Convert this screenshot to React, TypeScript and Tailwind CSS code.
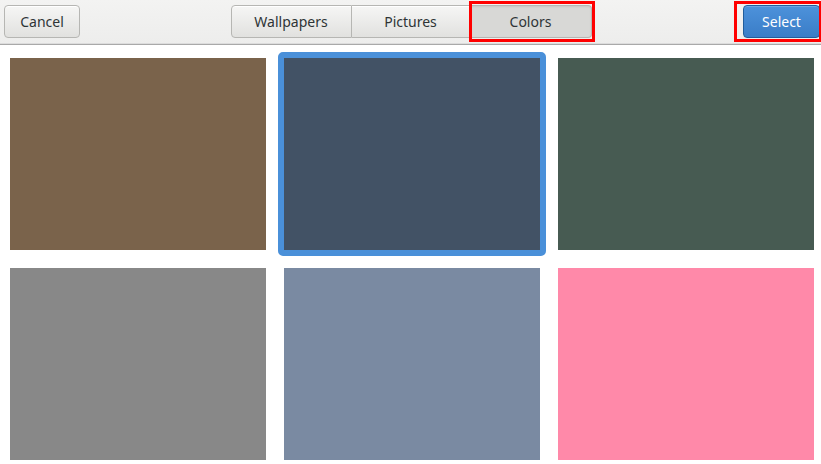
import React from "react";

const colors = ["#7a634b", "#425265", "#475b52", "#888888", "#7a8aa2", "#ff89a9"];

function RedBox({ className }: { className: string }) {
  return <span className={"pointer-events-none absolute border-[3px] border-[#ff0000] " + className} />;
}

export default function App() {
  return (
    <div
      className="w-[821px] h-[464px] overflow-hidden bg-white text-[#2e3436]"
      style={{ fontFamily: '"Noto Sans", "DejaVu Sans", sans-serif' }}
    >
      <div className="relative h-[45px] border-b border-[#a9a9a9] bg-gradient-to-b from-[#f3f3f2] to-[#ededec] shadow-[inset_0_-1px_0_#dcdcdc] grid grid-cols-[1fr_auto_1fr] items-start pt-[5px]">
        <div className="pl-[4px]">
          <button className="h-[33px] w-[76px] rounded-[4px] border border-[#b6b6b3] bg-gradient-to-b from-[#f6f6f5] to-[#e1e1df] text-[14px] shadow-[inset_0_1px_0_#ffffff]">
            Cancel
          </button>
        </div>
        <div className="flex ml-[1px]">
          <button className="h-[33px] w-[121px] rounded-l-[4px] border border-[#b6b6b3] bg-gradient-to-b from-[#f6f6f5] to-[#e1e1df] text-[14px] shadow-[inset_0_1px_0_#ffffff]">
            Wallpapers
          </button>
          <button className="h-[33px] w-[119px] border-y border-r border-[#b6b6b3] bg-gradient-to-b from-[#f6f6f5] to-[#e1e1df] text-[14px] shadow-[inset_0_1px_0_#ffffff]">
            Pictures
          </button>
          <div className="relative">
            <button className="h-[33px] w-[121px] rounded-r-[4px] border-y border-r border-[#b6b6b3] bg-[#d8d8d6] text-[14px] shadow-[inset_0_1px_2px_rgba(0,0,0,0.08)]">
              Colors
            </button>
            <RedBox className="-left-[2px] -right-[3px] -top-[4px] -bottom-[4px]" />
          </div>
        </div>
        <div className="flex justify-end pr-[1px]">
          <div className="relative">
            <button className="h-[33px] w-[77px] rounded-[4px] border border-[#215d9c] bg-gradient-to-b from-[#4d92db] to-[#3a7dc7] text-[14px] text-white shadow-[inset_0_1px_0_rgba(255,255,255,0.2)]">
              Select
            </button>
            <RedBox className="-left-[9px] -right-[2px] -top-[4px] -bottom-[4px]" />
          </div>
        </div>
      </div>
      <div className="grid grid-cols-[256px_256px_256px] gap-[18px] pl-[10px] pt-[13px]">
        {colors.map((c, i) => (
          <div key={c} className="relative h-[192px] w-[256px]" style={{ backgroundColor: c }}>
            {i === 1 && (
              <span className="pointer-events-none absolute -inset-[6px] rounded-[5px] border-[6px] border-[#4a90d9]" />
            )}
          </div>
        ))}
      </div>
    </div>
  );
}
